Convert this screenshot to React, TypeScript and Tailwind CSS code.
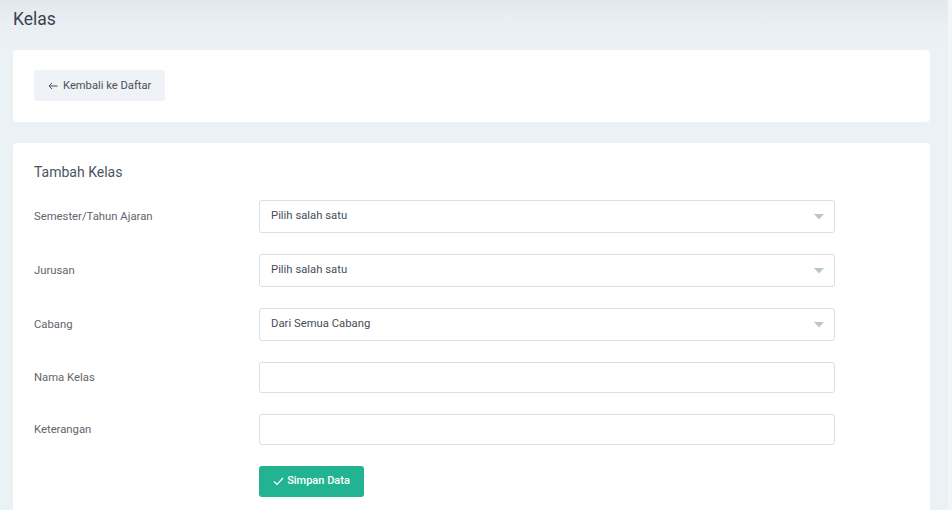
import React from "react";

const Arrow = () => (
  <svg width="10" height="6" viewBox="0 0 10 6" className="shrink-0">
    <path d="M0 0 L10 0 L5 5.5 Z" fill="#b9c6d0" />
  </svg>
);

function Row({ label, children }: { label: string; children: React.ReactNode }) {
  return (
    <div className="flex items-center">
      <div className="w-[225px] shrink-0 text-[11.3px] text-[#5f656d] leading-[16px] pt-[1px]">{label}</div>
      <div className="w-[576px]">{children}</div>
    </div>
  );
}

function Select({ value }: { value: string }) {
  return (
    <div className="h-[33px] border border-[#d9dfe6] rounded-[3px] bg-white flex items-center justify-between pl-[11px] pr-[10px] text-[11.3px] text-[#474d55]">
      <span>{value}</span>
      <Arrow />
    </div>
  );
}

function Input() {
  return <div className="h-[31px] border border-[#d9dfe6] rounded-[3px] bg-white" />;
}

export default function App() {
  return (
    <div
      className="w-[952px] min-h-[510px] flex bg-[linear-gradient(180deg,#e3e8ed_0px,#e8eef2_20px,#ebf2f6_45px,#ebf2f6_100%)]"
      style={{ fontFamily: "Roboto, 'Noto Sans', Arial, sans-serif" }}
    >
      <div className="w-[948px] pl-[13px] pr-[18px]">
        <div className="pt-[6px] h-[50px] text-[17.5px] text-[#3a4450] leading-[26px]">Kelas</div>
        <div className="bg-white rounded-[4px] h-[72px] px-[21px] pt-[20px]">
          <button className="h-[31px] pl-[14px] pr-[14px] rounded-[3px] bg-[#eff2f6] text-[11.2px] text-[#4a525c] flex items-center gap-[5px] leading-[16px]">
            <svg width="10" height="8" viewBox="0 0 10 8" className="mt-[1px]">
              <path d="M9.5 4 H1 M4 1 L1 4 L4 7" fill="none" stroke="#4a525c" strokeWidth="1" />
            </svg>
            <span className="pt-[1px]">Kembali ke Daftar</span>
          </button>
        </div>
        <div className="mt-[21px] bg-white rounded-[4px] px-[21px] pt-[19px] pb-[30px]">
          <div className="text-[14px] text-[#4b5560] leading-[20px]">Tambah Kelas</div>
          <div className="mt-[18px] flex flex-col gap-[21px]">
            <Row label="Semester/Tahun Ajaran">
              <Select value="Pilih salah satu" />
            </Row>
            <Row label="Jurusan">
              <Select value="Pilih salah satu" />
            </Row>
            <Row label="Cabang">
              <Select value="Dari Semua Cabang" />
            </Row>
            <Row label="Nama Kelas">
              <Input />
            </Row>
            <Row label="Keterangan">
              <Input />
            </Row>
            <div className="flex">
              <div className="w-[225px] shrink-0" />
              <button className="h-[31px] w-[105px] rounded-[3px] bg-[#22b492] text-white text-[11px] font-medium flex items-center justify-center gap-[3px]">
                <svg width="11" height="9" viewBox="0 0 11 9">
                  <path d="M1 4.5 L4 7.5 L10 1" fill="none" stroke="white" strokeWidth="1.2" />
                </svg>
                <span>Simpan Data</span>
              </button>
            </div>
          </div>
        </div>
      </div>
      <div className="w-[4px] bg-[#f2f6f8]" />
    </div>
  );
}
